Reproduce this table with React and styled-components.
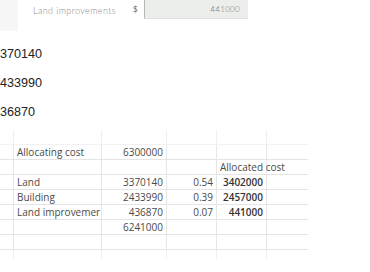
import React from "react"
import styled, { createGlobalStyle } from "styled-components"

const Global = createGlobalStyle`
  body {
    margin: 0;
    background: #ffffff;
    font-family: "Liberation Sans", Arial, sans-serif;
  }
`

const Page = styled.div`
  width: 370px;
  height: 272px;
  overflow: hidden;
  background: #fff;
`

const TopBar = styled.div`
  display: flex;
  align-items: flex-start;
  height: 31px;
`

const SidePanel = styled.div`
  width: 18px;
  height: 31px;
  background: #f6f6f6;
`

const FieldLabel = styled.div`
  margin-left: 15px;
  width: 100px;
  padding-top: 5px;
  font-family: Lato, "Open Sans", sans-serif;
  font-size: 9px;
  font-weight: 300;
  letter-spacing: 0.4px;
  color: #8a8a8a;
`

const Dollar = styled.div`
  width: 11px;
  padding-top: 4px;
  font-family: Lato, sans-serif;
  font-size: 8px;
  color: #666;
`

const ValueBox = styled.div`
  width: 104px;
  height: 19px;
  box-sizing: border-box;
  background: #eceeec;
  border-left: 1px solid #b8b8b8;
  border-bottom: 1px solid #e2e2e2;
  display: flex;
  align-items: center;
  justify-content: flex-end;
  padding-right: 8px;
  font-family: Lato, sans-serif;
  font-size: 8px;
  font-weight: 300;
  letter-spacing: 0.3px;
  color: #7a7a7a;
`

const Numbers = styled.div`
  margin-top: 9px;
`

const BigNumber = styled.div`
  font-size: 12.6px;
  line-height: 29px;
  color: #222;
`

const Sheet = styled.div`
  margin-top: 3px;
  display: grid;
  grid-template-columns: 14px 88px 65px 50px 50px 41px;
  grid-auto-rows: 15px;
  width: 308px;
  font-family: "Open Sans", "Liberation Sans", sans-serif;
  font-size: 10px;
  color: #444;
`

const Cell = styled.div`
  box-sizing: border-box;
  border-bottom: 1px solid ${p => (p.$faint ? "#f2f2f2" : "#e4e4e4")};
  border-right: ${p => (p.$last ? "none" : `1px solid ${p.$faint ? "#efefef" : "#e6e6e6"}`)};
  padding: 0 3px;
  line-height: 14px;
  white-space: nowrap;
  overflow: visible;
  text-align: ${p => (p.$num ? "right" : "left")};
  font-weight: ${p => (p.$bold ? 600 : 400)};
  color: ${p => (p.$bold ? "#333" : "#4a4a4a")};
`

const TailCell = styled.div`
  box-sizing: border-box;
  height: 9px;
  border-right: ${p => (p.$last ? "none" : "1px solid #f0f0f0")};
`

const rows = [
  [],
  ["Allocating cost", "6300000"],
  ["", "", "", "Allocated cost"],
  ["Land", "3370140", "0.54", "3402000"],
  ["Building", "2433990", "0.39", "2457000"],
  ["Land improvemer", "436870", "0.07", "441000"],
  ["", "6241000"],
  [],
]

const App = () => {
  return (
    <>
      <Global />
      <Page>
        <TopBar>
          <SidePanel />
          <FieldLabel>Land improvements</FieldLabel>
          <Dollar>$</Dollar>
          <ValueBox>441000</ValueBox>
        </TopBar>
        <Numbers>
          <BigNumber>370140</BigNumber>
          <BigNumber>433990</BigNumber>
          <BigNumber>36870</BigNumber>
        </Numbers>
        <Sheet>
          {rows.map((r, i) => (
            <React.Fragment key={i}>
              <Cell $faint={i === 0} />
              <Cell $faint={i === 0}>{r[0]}</Cell>
              <Cell $num $faint={i === 0}>{r[1]}</Cell>
              <Cell $num $faint={i === 0}>{r[2]}</Cell>
              {r[3] === "Allocated cost" ? (
                <Cell>{r[3]}</Cell>
              ) : (
                <Cell $num $bold $faint={i === 0}>{r[3]}</Cell>
              )}
              <Cell $last $faint={i === 0} />
            </React.Fragment>
          ))}
          {[0, 1, 2, 3, 4, 5].map(c => (
            <TailCell key={c} $last={c === 5} />
          ))}
        </Sheet>
      </Page>
    </>
  )
}

export default App
